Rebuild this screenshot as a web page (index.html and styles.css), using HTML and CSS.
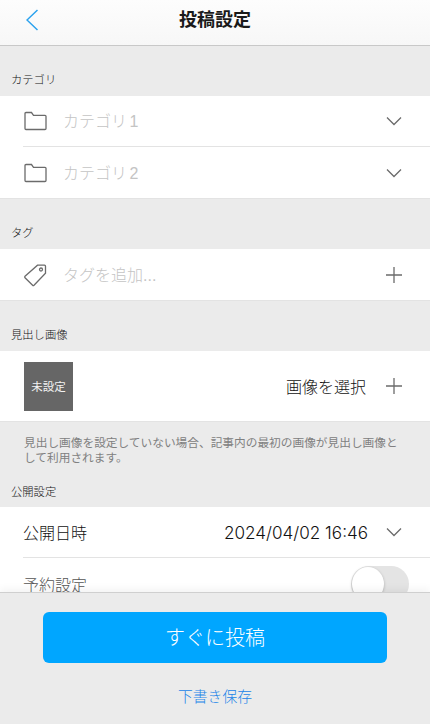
FILE: index.html
```html
<!doctype html>
<html lang="ja">
<head>
	<meta charset="utf-8">
	<title>投稿設定</title>
	<link rel="stylesheet" href="styles.css">
</head>
<body>
	<div class="page">
		<header class="topbar">
			<a class="back"><svg width="12" height="22" viewBox="0 0 12 22"><path d="M11.500 1 1 11l10.500 10" class="ico-blue"/></svg></a>
			<h1>投稿設定</h1>
		</header>

		<main class="scroll">
			<h2 class="sec">カテゴリ</h2>
			<div class="list">
				<div class="row">
					<svg class="lead" width="24" height="20" viewBox="0 0 24 20"><path d="M3 1.500h5.500l2 2.800H22a1 1 0 0 1 1 1v12.200a1 1 0 0 1-1 1H3a1 1 0 0 1-1-1V2.500a1 1 0 0 1 1-1z" class="ico-gray"/></svg>
					<span class="ph">カテゴリ 1</span>
					<svg class="act" width="16" height="10" viewBox="0 0 16 10"><path d="M1 1.500 8 8.500l7-7" class="ico-gray"/></svg>
				</div>
				<div class="row">
					<svg class="lead" width="24" height="20" viewBox="0 0 24 20"><path d="M3 1.500h5.500l2 2.800H22a1 1 0 0 1 1 1v12.200a1 1 0 0 1-1 1H3a1 1 0 0 1-1-1V2.500a1 1 0 0 1 1-1z" class="ico-gray"/></svg>
					<span class="ph">カテゴリ 2</span>
					<svg class="act" width="16" height="10" viewBox="0 0 16 10"><path d="M1 1.500 8 8.500l7-7" class="ico-gray"/></svg>
				</div>
			</div>

			<h2 class="sec">タグ</h2>
			<div class="list">
				<div class="row">
					<svg class="lead" width="24" height="24" viewBox="0 0 24 24"><path d="M14.500 2.200h7a1 1 0 0 1 1 1v7L11 22.300a1 1 0 0 1-1.400 0L2 14.700a1 1 0 0 1 0-1.400z" class="ico-gray"/><circle cx="18" cy="6.500" r="1.500" class="ico-gray"/></svg>
					<span class="ph ph-plain">タグを追加...</span>
					<svg class="act" width="18" height="18" viewBox="-2 0 18 18"><path d="M8 1v16M0 9h16" class="ico-gray"/></svg>
				</div>
			</div>

			<h2 class="sec">見出し画像</h2>
			<div class="list">
				<div class="row row-img">
					<div class="thumb">未設定</div>
					<span class="val">画像を選択</span>
					<svg class="act" width="18" height="18" viewBox="-2 0 18 18"><path d="M8 1v16M0 9h16" class="ico-gray"/></svg>
				</div>
			</div>
			<p class="note">見出し画像を設定していない場合、記事内の最初の画像が見出し画像として利用されます。</p>

			<h2 class="sec sec-tight">公開設定</h2>
			<div class="list">
				<div class="row">
					<span class="name">公開日時</span>
					<span class="val val-date">2024/04/02 16:46</span>
					<svg class="act" width="16" height="10" viewBox="0 0 16 10"><path d="M1 1.500 8 8.500l7-7" class="ico-gray"/></svg>
				</div>
				<div class="row">
					<span class="name name-dim">予約設定</span>
					<span class="toggle"><span class="knob"></span></span>
				</div>
			</div>
		</main>

		<footer class="bottom">
			<button class="post">すぐに投稿</button>
			<a class="draft">下書き保存</a>
		</footer>
	</div>
</body>
</html>
```

FILE: styles.css
```css
* {margin:0; padding:0; box-sizing:border-box;}
html, body {height:100%;}
body {font-family:"Liberation Sans","Noto Sans CJK JP",sans-serif; background:#ebebeb; color:#2b2b2b;}

.page {height:724px; display:flex; flex-direction:column; overflow:hidden;}

.topbar {height:46px; flex:none; display:flex; align-items:center; justify-content:center; background:linear-gradient(#fdfdfd,#f7f7f7); border-bottom:1px solid #c8c8c8; position:relative;}
.topbar h1 {font-size:18px; font-weight:700; color:#1a1a1a; margin-top:-9px;}
.back {position:absolute; left:26px; top:9px; line-height:0;}

.scroll {flex:1; min-height:0; overflow:hidden;}

.sec {height:50px; padding:0 11px 9px; display:flex; align-items:flex-end; font-size:11.300px; font-weight:300; color:#111; line-height:14px;}
.sec-tight {height:29px; padding-bottom:8px;}

.list {background:#fff; border-bottom:1px solid #e3e3e3;}
.row {height:51px; margin-left:23px; padding-right:28px; display:flex; align-items:center; border-bottom:1px solid #e3e3e3;}
.row:last-child {border-bottom:0;}
.row-img {height:70px; padding-left:1px;}

.lead {flex:none; margin-right:16px;}
.act {flex:none; margin-left:18px;}
.ph {flex:1; font-size:16px; font-weight:300; color:#c4c4c4; word-spacing:-2px; padding-bottom:2px;}
.ph-plain {word-spacing:0;}
.name {flex:1; font-size:16px; font-weight:300; color:#111;}
.name-dim {color:#555;}
.val {font-size:16px; font-weight:300; color:#111;}
.val-date {font-family:Inter,"Noto Sans CJK JP",sans-serif; font-size:17.100px;}

.thumb {width:49px; height:49px; flex:none; margin-right:auto; background:#666; color:#f2f2f2; font-size:11.500px; display:flex; align-items:center; justify-content:center;}

.note {padding:13px 24px 0; height:56px; font-size:11.700px; line-height:15px; color:#808080;}

.toggle {width:58px; height:36px; margin-right:-7px; margin-top:1px; border-radius:18px; background:#e4e4e4; position:relative; flex:none;}
.knob {position:absolute; left:1px; top:1px; width:32px; height:34px; border-radius:50%; background:#fff; box-shadow:0 1px 3px rgba(0,0,0,.25);}

.bottom {height:132px; flex:none; background:#ebebeb; border-top:1px solid #cfcfcf; box-shadow:0 -3px 8px rgba(0,0,0,.05); display:flex; flex-direction:column; align-items:center; position:relative;}
.post {width:344px; height:51px; margin-top:19px; padding-bottom:3px; border:0; border-radius:6px; background:#00a6ff; color:#fff; font:300 20px "Liberation Sans","Noto Sans CJK JP",sans-serif;}
.draft {margin-top:22px; font-size:14.800px; font-weight:300; color:#1a84e8;}

.ico-blue {fill:none; stroke:#2ba2ee; stroke-width:1.500;}
.ico-gray {fill:none; stroke:#6b6b6b; stroke-width:1.300;}
```
